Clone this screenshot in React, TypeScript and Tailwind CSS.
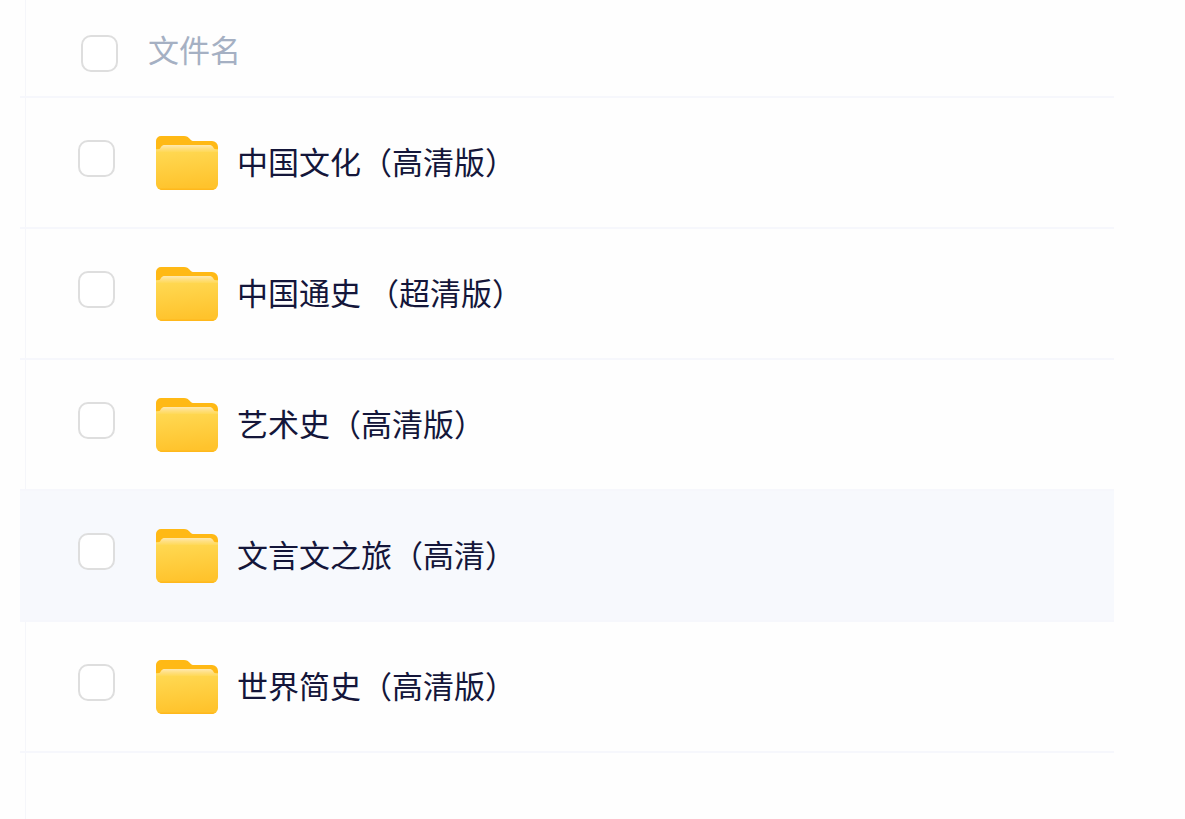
import React, { useState } from 'react';

const files = [
  { id: 1, name: '中国文化（高清版）' },
  { id: 2, name: '中国通史 （超清版）' },
  { id: 3, name: '艺术史（高清版）' },
  { id: 4, name: '文言文之旅（高清）' },
  { id: 5, name: '世界简史（高清版）' },
];

const checkboxClass =
  "block w-[37px] h-[37px] appearance-none rounded-[10px] border-2 border-[#dedede] bg-white checked:border-blue-500 checked:bg-blue-500 cursor-pointer";

const FolderIcon = () => (
  <svg width="64" height="56" viewBox="0 0 64 56" className="shrink-0" aria-hidden="true">
    <defs>
      <linearGradient id="folder-front" x1="0" y1="0" x2="0.15" y2="1">
        <stop offset="0" stopColor="#ffda55" />
        <stop offset="1" stopColor="#ffc32c" />
      </linearGradient>
      <linearGradient id="folder-paper" x1="0" y1="0" x2="0" y2="1">
        <stop offset="0" stopColor="#ffe9b0" />
        <stop offset="0.5" stopColor="#ffdf80" />
        <stop offset="1" stopColor="#ffd957" />
      </linearGradient>
    </defs>
    {/* back with the tab */}
    <path d="M1 6a5 5 0 0 1 5-5h23c3 0 4 1 6 3 1 1.500 2 2 4 2h18a6 6 0 0 1 6 6v6H1z" fill="#ffb915" />
    {/* front */}
    <path d="M1 14h62v35a6 6 0 0 1-6 6H7a6 6 0 0 1-6-6z" fill="url(#folder-front)" />
    {/* light edge of the front */}
    <path d="M1 15c3 0 4-1 5-3 1-1.500 2-2 4-2h44c2 0 3 .5 4 2 1 2 2 3 5 3v2H1z" fill="url(#folder-paper)" />
    <path d="M4 53.500c1 1 2 1.500 3 1.500h50c1 0 2-.5 3-1.500z" fill="#ffb81c" />
  </svg>
);

export default function App() {
  const [selected, setSelected] = useState<number[]>([]);

  const toggle = (id: number) => {
    setSelected(selected.includes(id) ? selected.filter((s) => s !== id) : [...selected, id]);
  };

  const toggleAll = () => {
    setSelected(selected.length === files.length ? [] : files.map((f) => f.id));
  };

  return (
    <div className="relative min-h-screen bg-[#fefefe] pl-5 pr-[71px] font-['Noto_Sans_CJK_SC',sans-serif] text-[31px] leading-10">
      {/* Panel edge, runs behind the rows */}
      <div className="absolute inset-y-0 left-[25px] w-px bg-[#f5f6fa]" />

      <table className="relative w-full table-fixed border-separate border-spacing-0 text-left">
        <colgroup>
          <col className="w-32" />
          <col />
        </colgroup>
        <thead>
          <tr className="h-[98px]">
            <th className="border-b-2 border-[#f6f7fc] pl-[61px] pt-2.5">
              <input
                type="checkbox"
                aria-label="全选"
                className={checkboxClass}
                checked={selected.length === files.length}
                onChange={toggleAll}
              />
            </th>
            <th className="border-b-2 border-[#f6f7fc] pt-0.5 font-normal text-[#a5b0c3]">文件名</th>
          </tr>
        </thead>
        <tbody>
          {files.map((file) => (
            <tr key={file.id} className={`h-[131px] ${file.id === 4 ? 'bg-[#f7f9fd]' : 'hover:bg-[#f7f9fd]'}`}>
              <td className="border-b-2 border-[#f6f7fc] pl-[58px] pb-2">
                <input
                  id={`file-${file.id}`}
                  type="checkbox"
                  className={checkboxClass}
                  checked={selected.includes(file.id)}
                  onChange={() => toggle(file.id)}
                />
              </td>
              <td className="border-b-2 border-[#f6f7fc] pl-[7px]">
                <label htmlFor={`file-${file.id}`} className="flex items-center gap-[18px] text-[#14163a]">
                  <FolderIcon />
                  <span className="whitespace-nowrap pb-1">{file.name}</span>
                </label>
              </td>
            </tr>
          ))}
        </tbody>
      </table>
    </div>
  );
}
